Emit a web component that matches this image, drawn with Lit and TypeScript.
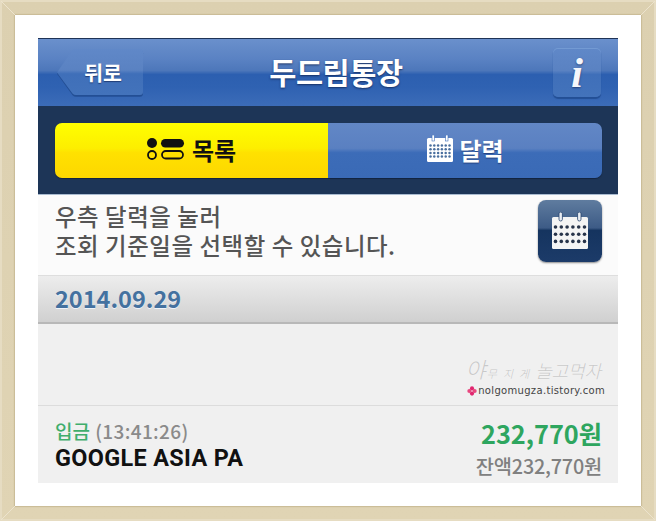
import { LitElement, html, css, svg } from "lit";
import { customElement } from "lit/decorators.js";

const calendarGrid = (x0: number, y0: number, dx: number, dy: number, r: number, cols: number, rows: number, fill: string) => {
  const out = [];
  for (let j = 0; j < rows; j++) for (let i = 0; i < cols; i++) {
    out.push(svg`<circle cx=${x0 + i * dx} cy=${y0 + j * dy} r=${r} fill=${fill}></circle>`);
  }
  return out;
};

@customElement("app-root")
export class AppRoot extends LitElement {
  static styles = css`
    :host { display: block; width: 656px; height: 521px; font-family: "Noto Sans CJK KR", "Noto Sans", sans-serif; overflow: hidden; }
    .frame {
      box-sizing: border-box; width: 656px; height: 521px; padding: 15px; position: relative;
      background: linear-gradient(#dcd0b0, #e0d4b4);
      box-shadow: inset 0 0 0 2px #e6dcc2;
    }
    .mitre { position: absolute; inset: 0; pointer-events: none; }
    .mat { box-sizing: border-box; height: 491px; background: #fff; padding: 23px; box-shadow: 0 0 1px 1px #cbbd98; position: relative; }
    .phone { height: 445px; display: flex; flex-direction: column; background: #f0f0f0; }

    .header {
      height: 68px; box-sizing: border-box; padding: 9px 17px 9px 18px;
      display: flex; align-items: center; justify-content: space-between; position: relative;
      border-top: 1px solid #1f3356;
      background: linear-gradient(#6a90cc 0%, #5a82c3 30%, #4d77ba 47%, #2c5fb0 53%, #2f62b2 72%, #3c6cb8 100%);
    }
    .back { width: 88px; height: 49px; display: block; flex: none; position: relative; }
    .back svg { position: absolute; inset: 0; }
    .back span {
      position: absolute; left: 25px; top: 0; width: 44px; height: 47px; display: flex; align-items: center; justify-content: center;
      color: #fff; font-size: 20.5px; font-weight: 700; letter-spacing: -0.2px; text-shadow: 0 1px 1px rgba(20,40,90,.7);
    }
    .title {
      position: absolute; inset: 0; display: flex; align-items: center; justify-content: center;
      color: #fff; font-size: 29.5px; font-weight: 700; padding: 0 0 3px 16px; box-sizing: border-box;
      text-shadow: 0 1px 2px rgba(15,35,80,.8); pointer-events: none; letter-spacing: -0.4px;
    }
    .info {
      width: 48px; height: 49px; box-sizing: border-box; border-radius: 5px; flex: none; position: relative; z-index: 1;
      background: linear-gradient(#6088c8 0%, #5a82c2 46%, #3f6fb9 54%, #4373bb 100%);
      box-shadow: 0 2px 1px #234f95, inset 0 1px 0 #739ad3;
      display: flex; align-items: center; justify-content: center;
      color: #f4f6fb; font-family: "Liberation Serif", serif; font-style: italic; font-weight: 700; font-size: 43px; line-height: 1;
      text-shadow: 0 1px 2px rgba(20,40,90,.7);
    }

    .tabs-band { height: 89px; box-sizing: border-box; padding: 17px 16px 17px 17px; background: #1d3557; border-bottom: 1px solid #a9bbd0; }
    .tabs { display: flex; height: 55px; border-radius: 7px; overflow: hidden; box-shadow: 0 1px 1px #12233f; }
    .tab { display: flex; align-items: center; justify-content: center; gap: 7px; font-size: 24px; font-weight: 700; padding-bottom: 3px; box-sizing: border-box; }
    .tab.list {
      flex: none; width: 273px; color: #111;
      background: linear-gradient(#ffff00 0%, #fdee00 46%, #ffe100 54%, #fdd700 100%);
    }
    .tab.cal {
      flex: 1; color: #fff; gap: 5px;
      background: linear-gradient(#6287c6 0%, #5a80c1 46%, #3c6cb8 54%, #3a6ab6 100%);
      text-shadow: 0 1px 1px rgba(20,40,90,.6);
    }

    .note {
      height: 81px; box-sizing: border-box; background: #fbfbfb; display: flex; justify-content: space-between;
      padding: 5px 16px 0 17px; border-bottom: 1px solid #dedede;
    }
    .note p { margin: 2px 0 0; color: #555; font-size: 23.4px; font-weight: 500; line-height: 29px; letter-spacing: .6px; }
    .cal-btn {
      width: 64px; height: 62px; border-radius: 8px; flex: none; display: flex; align-items: center; justify-content: center;
      background: linear-gradient(#5f7c9f 0%, #3d5b86 45%, #15345f 49%, #1c3b69 100%);
      box-shadow: 0 1px 2px rgba(0,0,0,.45);
    }

    .date {
      height: 48px; box-sizing: border-box; padding: 0 17px 2px; display: flex; align-items: center;
      background: linear-gradient(#ededed, #d0d0d0);
      border-bottom: 2px solid #b8b8b8;
      color: #44719f; font-size: 23.5px; font-weight: 700;
      text-shadow: 0 1px 0 #eef3fa;
    }
    .gap { height: 82px; background: #f0f0f0; border-bottom: 1px solid #dcdcdc; box-sizing: border-box; position: relative; }
    .wm { position: absolute; right: 13px; bottom: 8px; }
    .wm .script {
      font-weight: 300; font-style: italic; color: #c9c9c9; font-size: 18px; line-height: 26px;
      text-shadow: 0 0 1px #fff; margin: 0 4px 1px 0; display: flex; align-items: baseline; justify-content: flex-end;
    }
    .wm .script .big { font-size: 22px; line-height: 26px; }
    .wm .script .small { font-size: 11px; line-height: 16px; letter-spacing: 6px; margin-left: 1px; margin-right: 0; color: #c4c4c4; }
    .wm .script .rest { letter-spacing: -.1px; }
    .wm .url { font-family: "DejaVu Sans", sans-serif; color: #444; font-size: 10px; line-height: 13px; display: flex; align-items: center; gap: 1px; justify-content: flex-end; letter-spacing: .32px; }

    .row { flex: 1; display: flex; justify-content: space-between; padding: 11px 16px 0 17px; background: #f0f0f0; }
    .left .kind { font-size: 19px; line-height: 28px; font-weight: 500; color: #3fae6c; }
    .left .kind span { color: #8a8a8a; font-size: 19px; letter-spacing: .35px; margin-left: 1px; }
    .left .name { font-family: Roboto, sans-serif; font-size: 23.4px; line-height: 27px; font-weight: 700; color: #111; letter-spacing: .35px; }
    .right { text-align: right; }
    .amount { font-size: 25.3px; line-height: 33px; font-weight: 700; color: #2ea65f; }
    .balance { font-size: 19.8px; line-height: 31px; font-weight: 500; color: #808080; letter-spacing: -.2px; }
  `;

  render() {
    return html`
      <div class="frame">
        <div class="mat"><div class="phone">
        <div class="header">
          <div class="title">두드림통장</div>
          <div class="back">
            <svg width="88" height="49" viewBox="0 0 88 49">
              <defs>
                <linearGradient id="bk" x1="0" y1="0" x2="0" y2="1">
                  <stop offset="0" stop-color="#6088c8"></stop><stop offset=".46" stop-color="#5a82c2"></stop>
                  <stop offset=".54" stop-color="#3f6fb9"></stop><stop offset="1" stop-color="#4373bb"></stop>
                </linearGradient>
              </defs>
              <path d="M1 24.5 L16 2.5 Q17.2 1 19 1 H84 Q87 1 87 4 V44 Q87 47.6 84 47.6 H20 Q18 47.6 16.5 46 Z" fill="#234f95" transform="translate(0,1.2)"></path>
              <path d="M1 24.5 L16 2.5 Q17.2 1 19 1 H84 Q87 1 87 4 V44 Q87 47 84 47 H20 Q18 47 16.5 45.5 Z" fill="url(#bk)"></path>
            </svg>
            <span>뒤로</span>
          </div>
          <div class="info">i</div>
        </div>

        <div class="tabs-band"><div class="tabs">
          <div class="tab list">
            <svg width="38" height="24" viewBox="0 0 38 24">
              <circle cx="5" cy="6" r="5" fill="#111"></circle>
              <circle cx="5" cy="18" r="4" fill="none" stroke="#111" stroke-width="1.8"></circle>
              <rect x="14" y="2" width="23" height="8.5" rx="4.25" fill="#111"></rect>
              <rect x="15" y="14" width="21" height="7.5" rx="3.75" fill="none" stroke="#111" stroke-width="1.8"></rect>
            </svg>
            <span>목록</span>
          </div>
          <div class="tab cal">
            <svg width="28" height="28" viewBox="0 0 28 28">
              <rect x="1" y="3" width="26" height="24" rx="1.5" fill="#fff"></rect>
              <rect x="6" y="0" width="2.4" height="6" fill="#fff" stroke="#3f6fb9" stroke-width=".6"></rect>
              <rect x="19.6" y="0" width="2.4" height="6" fill="#fff" stroke="#3f6fb9" stroke-width=".6"></rect>
              ${calendarGrid(4.5, 10.5, 3.8, 3.7, 1.25, 6, 4, "#4a6f9e")}
            </svg>
            <span>달력</span>
          </div>
        </div></div>

        <div class="note">
          <p>우측 달력을 눌러<br />조회 기준일을 선택할 수 있습니다.</p>
          <div class="cal-btn">
            <svg width="38" height="38" viewBox="0 0 38 38">
              <rect x="1" y="5" width="36" height="32" rx="1.5" fill="#f4f4f4"></rect>
              <rect x="8" y="0" width="3.4" height="9" rx="1.7" fill="#e9edf2" stroke="#26426d" stroke-width=".8"></rect>
              <rect x="26.6" y="0" width="3.4" height="9" rx="1.7" fill="#e9edf2" stroke="#26426d" stroke-width=".8"></rect>
              ${calendarGrid(4.5, 15, 5.8, 7.2, 1.8, 6, 3, "#28344a")}
            </svg>
          </div>
        </div>

        <div class="date">2014.09.29</div>

        <div class="gap">
          <div class="wm">
            <div class="script"><span class="big">야</span><span class="small">무지게</span><span class="rest">놀고먹자</span></div>
            <div class="url">
              <svg width="10" height="10" viewBox="0 0 10 10">
                <circle cx="5" cy="2.4" r="2.1" fill="#e0266f"></circle><circle cx="5" cy="7.6" r="2.1" fill="#e0266f"></circle>
                <circle cx="2.4" cy="5" r="2.1" fill="#e8477f"></circle><circle cx="7.6" cy="5" r="2.1" fill="#e8477f"></circle>
              </svg>
              <span>nolgomugza.tistory.com</span>
            </div>
          </div>
        </div>

        <div class="row">
          <div class="left">
            <div class="kind">입금 <span>(13:41:26)</span></div>
            <div class="name">GOOGLE ASIA PA</div>
          </div>
          <div class="right">
            <div class="amount">232,770원</div>
            <div class="balance">잔액232,770원</div>
          </div>
        </div>
        </div></div>
        <svg class="mitre" width="656" height="521" viewBox="0 0 656 521" fill="none" stroke="#ece3cd" stroke-width="1">
          <path d="M1 1 L15 15 M655 1 L641 15 M1 520 L15 506 M655 520 L641 506"></path>
        </svg>
      </div>
    `;
  }
}
